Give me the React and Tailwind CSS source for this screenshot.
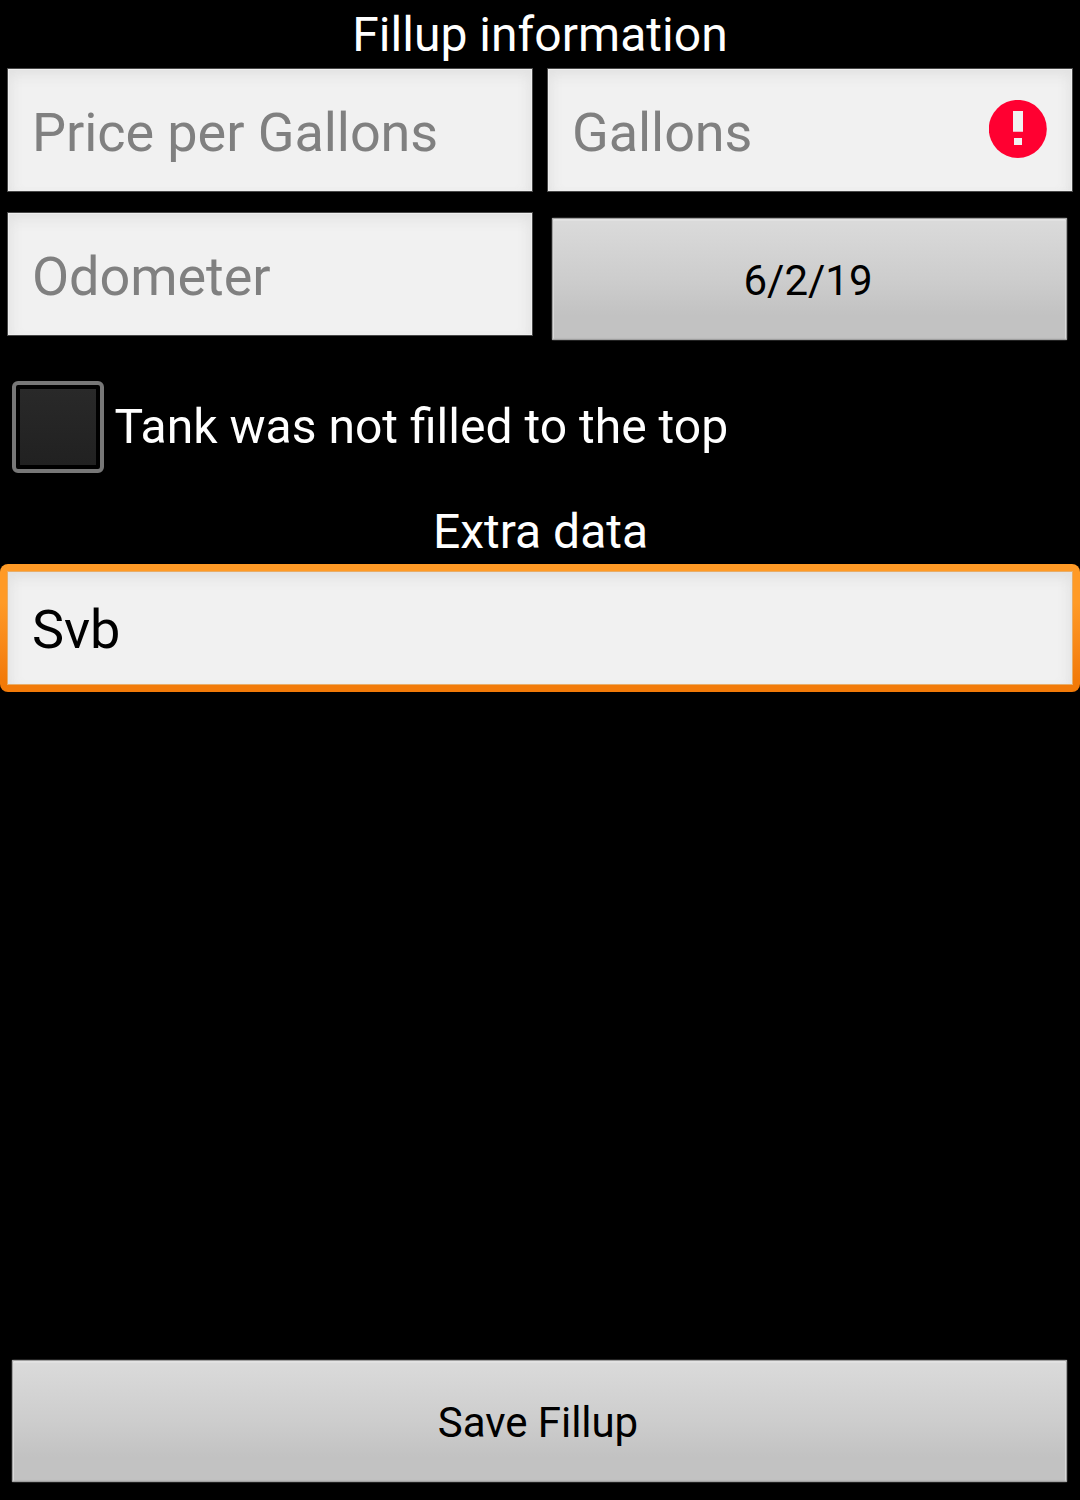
const field = "bg-[#f1f1f1] pl-[24px] pr-[25px] flex items-center text-[54px] leading-none tracking-[-0.07px]";
const fieldEdge = "h-[122px] shadow-[0_0_0_1px_#484848,inset_0_0_0_1px_#efefef,inset_0_12px_14px_-6px_#e1e1e1,inset_10px_0_14px_-8px_#e1e1e1,inset_-10px_0_14px_-8px_#e1e1e1]";
const focusedEdge = "h-[112px] shadow-[0_0_0_1px_#e8ad68,inset_0_12px_14px_-6px_#e1e1e1,inset_10px_0_14px_-8px_#e1e1e1,inset_-10px_0_14px_-8px_#e1e1e1]";
const button = "h-[122px] rounded-[2px] bg-linear-to-b from-[#dbdbdb] via-[#cdcdcd] via-50% to-[#c2c2c2] to-80% flex items-center justify-center text-[42px] leading-none text-black shadow-[0_0_0_1px_#222,inset_0_0_0_1px_#a0a0a0,inset_0_3px_1px_#e2e2e2,inset_2px_0_0_#dadada,inset_-2px_0_0_#dadada,inset_0_-2px_1px_#bababa]";

function ErrorIcon() {
  return (
    <svg className="w-[58px] h-[58px] mb-[2px]" viewBox="0 0 58 58" aria-label="Error">
      <circle cx="28.8" cy="28.9" r="29" fill="#ff0031" />
      <path d="M24 11h10v20.7H24zM25 38h8v7h-8z" fill="#f1f1f1" />
    </svg>
  );
}

export default function App() {
  return (
    <main className="w-[1080px] h-[1500px] bg-black text-white font-['Roboto',sans-serif] flex flex-col overflow-hidden">
      <h1 className="h-[69px] text-center text-[48px] leading-[69px] tracking-[0.03px]">Fillup information</h1>
      <div className="grid grid-cols-2 gap-x-[16px] px-[8px]">
        <div className={field + " " + fieldEdge + " text-[#808080]"}>
          <span className="pt-[6px]">Price per Gallons</span>
        </div>
        <div className={field + " " + fieldEdge + " text-[#808080] justify-between"}>
          <span className="pt-[6px]">Gallons</span>
          <ErrorIcon />
        </div>
        <div className={field + " " + fieldEdge + " text-[#808080] mt-[22px]"}>
          <span className="pt-[6px]">Odometer</span>
        </div>
        <div className={button + " mt-[27px] ml-[4px] mr-[5px]"}>
          <span className="pt-[4px] pr-[3px]">6/2/19</span>
        </div>
      </div>
      <label className="mt-[41px] ml-[12px] h-[92px] flex items-center gap-[10.5px] text-[48.05px] leading-[48px]">
        <span className="w-[92px] h-[92px] rounded-[6px] border-4 border-[#777] bg-black p-[4px]">
          <span className="block w-full h-full bg-linear-to-b from-[#292929] to-[#212121]" />
        </span>
        <span>Tank was not filled to the top</span>
      </label>
      <h2 className="mt-[27px] h-[64px] pl-px text-center text-[48px] leading-[64px]">Extra data</h2>
      <div className="h-[128px] rounded-[8px] bg-linear-to-b from-[#ff9a26] from-30% to-[#f27a08] to-90% p-[8px]">
        <div className={field + " " + focusedEdge + " text-black"}>
          <span className="pt-[4px]">Svb</span>
        </div>
      </div>
      <div className={button + " mt-auto mb-[18px] ml-[12px] mr-[13px]"}>
        <span className="pt-[4px] pr-[3px] tracking-[-0.05px]">Save Fillup</span>
      </div>
    </main>
  );
}
